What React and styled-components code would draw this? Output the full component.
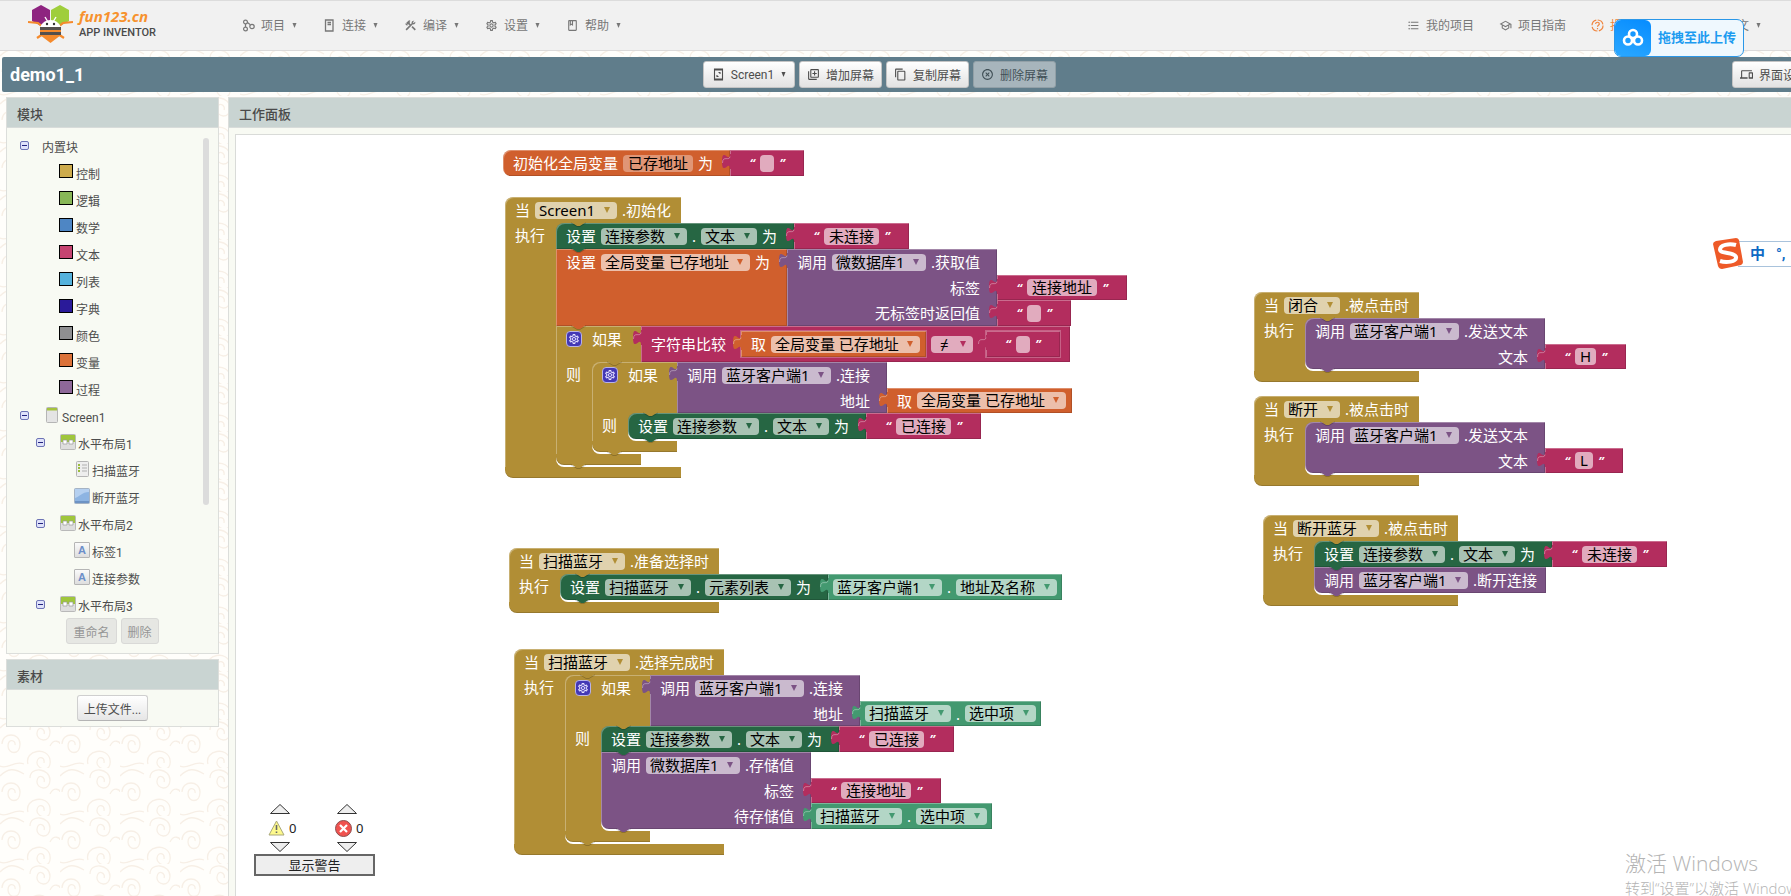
import React from 'react';
import styled, { createGlobalStyle, css } from 'styled-components';
import {
  MdOutlineSettings,
  MdConstruction,
  MdOutlineClass,
  MdOutlineSchool,
  MdFormatListBulleted,
  MdOutlineLibraryAdd,
  MdContentCopy,
  MdHighlightOff,
  MdDevices,
  MdLanguage,
} from 'react-icons/md';

const GOLD = '#b18e35';
const GREEN = '#266643';
const MINT = '#439970';
const ORANGE = '#d05f2d';
const PURPLE = '#7c5385';
const PINK = '#b32d5e';

const swirl = encodeURIComponent(
  `<svg xmlns="http://www.w3.org/2000/svg" width="60" height="48"><g fill="none" stroke="#f7efe6" stroke-width="1.3"><path d="M2 24c0-12 18-12 18 0s-12 10-12 2 8-6 7-1M30 10c0-12 20-10 20 2s-14 9-13 1 9-4 7 1M28 44c-4-14 20-18 22-4s-14 9-13 2 8-5 7 1M0 46c8 4 14-6 24-2M50 26c4-8 10-4 10-2M0 8c8-8 14-8 24-2"/></g></svg>`
);

const GlobalStyle = createGlobalStyle`
  body {
    margin: 0;
    overflow: hidden;
    font-family: Roboto, 'Noto Sans CJK SC', sans-serif;
    font-size: 12px;
    color: #4d4d4d;
    background: #fffefb url("data:image/svg+xml,${swirl}");
  }
  * {
    box-sizing: border-box;
  }
  button, input, select {
    font: inherit;
    color: inherit;
    margin: 0;
  }
  ul {
    list-style: none;
    margin: 0;
    padding: 0;
  }
`;

const Page = styled.div`
  display: flex;
  flex-direction: column;
  height: 100vh;
  overflow: hidden;
`;

/* ---------- top bar ---------- */

const TopBar = styled.header`
  display: flex;
  align-items: center;
  height: 51px;
  flex: none;
  padding: 0 30px 0 28px;
  background: #f1f1f1;
  border-top: 1px solid #dcdcdc;
  border-bottom: 1px solid #dcdada;
`;

const Brand = styled.a`
  display: flex;
  align-items: center;
  gap: 6px;
  width: 214px;
  margin-bottom: 3px;
  color: #4a4a4a;
  text-decoration: none;
`;

const BrandText = styled.span`
  display: flex;
  flex-direction: column;
  font-size: 11px;
  font-weight: 500;
  line-height: 16px;
`;

const BrandName = styled.strong`
  font-family: 'Open Sans', sans-serif;
  font-size: 15px;
  font-style: italic;
  line-height: 18px;
  color: #f7922d;
`;

const Nav = styled.nav`
  display: flex;
  align-items: center;
  gap: ${(p) => p.$gap}px;
  margin-left: ${(p) => (p.$end ? 'auto' : '0')};
`;

const NavButton = styled.button`
  display: flex;
  align-items: center;
  gap: 6px;
  padding: 0;
  border: 0;
  background: none;
  color: ${(p) => p.$color || '#777'};
  line-height: 18px;
  margin-right: ${(p) => (p.$apart ? '23px' : '0')};

  > svg:first-child {
    width: 13px;
    height: 13px;
    flex: none;
  }
`;

const CaretSvg = styled.svg`
  width: 5px;
  height: 5px;
  margin-left: 1px;
  fill: currentColor;
`;

const Caret = () => (
  <CaretSvg viewBox="0 0 5 5">
    <path d="M.5 0h4L2.500 5z" />
  </CaretSvg>
);

const Logo = () => (
  <svg width="45" height="38" viewBox="0 0 45 38">
    <path d="M13 0l9 5v11l-9 5-9-5V5z" fill="#8e2480" />
    <path d="M32 0l9 5v11l-9 5-9-5V5z" fill="#9fce3b" />
    <path
      d="M0 17l10 1 6 5M45 17l-10 1-6 5M9 33l6-4M36 33l-6-4"
      fill="none"
      stroke="#f58a2c"
      strokeWidth="2.200"
    />
    <path d="M17 12l3 5M28 12l-3 5" stroke="#fff" strokeWidth="1.400" />
    <path d="M12 24c0-5 5-9 10.500-9S33 19 33 24z" fill="#fff" />
    <circle cx="19" cy="19" r="1.200" fill="#333" />
    <circle cx="26" cy="19" r="1.200" fill="#333" />
    <path d="M12 22h21v8l-10.500 8L12 30z" fill="#f58a2c" />
    <path d="M12 22h21v3H12zM12 27h21v3H12z" fill="#54504e" />
  </svg>
);

const ProjectIcon = () => (
  <svg viewBox="0 0 13 13" fill="none" stroke="currentColor" strokeWidth="1.200">
    <circle cx="3.500" cy="3" r="1.900" />
    <circle cx="3.500" cy="10" r="1.900" />
    <circle cx="10" cy="7.500" r="2.200" />
    <path d="M3.500 5v3M5.500 3.500L8 5.500" />
  </svg>
);

const PhoneIcon = () => (
  <svg viewBox="0 0 13 13" fill="none" stroke="currentColor" strokeWidth="1.300">
    <path d="M2.500 1h7.500v11H2.500zM4.500 3.500h3.500M4.500 5.500h3.500" />
  </svg>
);

const ScreenIcon = () => (
  <svg viewBox="0 0 13 13" fill="none" stroke="currentColor" strokeWidth="1.100">
    <path d="M2.500 1h8v11h-8zM2.500 2h8M2.500 11h8M6.500 4.500h2M8 4.500v1.500M5 7v2M5 8.500h1.500" />
  </svg>
);

const DonateIcon = () => (
  <svg viewBox="0 0 13 13" fill="none" stroke="currentColor" strokeWidth="1.200">
    <circle cx="6.500" cy="6.500" r="5.500" strokeDasharray="7 1.500" />
    <path d="M4.700 5c0-2.400 3.600-2.300 3.600 0 0 1.300-1.800 1.300-1.800 2.700M6.500 9v1.200" />
  </svg>
);

/* ---------- project title bar ---------- */

const TitleBar = styled.div`
  display: flex;
  align-items: center;
  height: 35px;
  flex: none;
  margin: 6px 0 5px 2px;
  padding-left: 8px;
  background: #607d8b;
  border-radius: 2px 0 0 2px;
`;

const ProjectName = styled.h1`
  width: 693px;
  margin: 0;
  font-size: 18px;
  font-weight: 700;
  color: #fff;
`;

const ScreenTools = styled.div`
  display: flex;
  gap: 4px;
`;

const ToolButton = styled.button`
  display: flex;
  align-items: center;
  justify-content: center;
  gap: 6px;
  height: 27px;
  padding: 0 7px;
  border: 1px solid #c4c4c4;
  border-radius: 3px;
  background: linear-gradient(#fff, #e2e2e2);
  color: #4d4d4d;
  white-space: nowrap;

  > svg:first-child {
    width: 13px;
    height: 13px;
    flex: none;
  }

  &:disabled {
    opacity: 0.5;
    background: #eee;
    color: #222;
  }
`;

const ScreenButton = styled(ToolButton)`
  width: 92px;
`;

const ViewSwitch = styled.div`
  margin-left: auto;
  margin-right: -24px;
`;

/* ---------- side column ---------- */

const Columns = styled.main`
  display: flex;
  flex: 1;
  gap: 9px;
  min-height: 0;
  padding-left: 6px;
`;

const Side = styled.aside`
  display: flex;
  flex-direction: column;
  gap: 5px;
  width: 213px;
  flex: none;
`;

const Panel = styled.section`
  border: 1px solid #dcdedb;
  background: #f8faf3;
`;

const WorkPanel = styled(Panel)`
  display: flex;
  flex-direction: column;
  flex: 1;
  margin: 0 -8px -8px 0;
`;

const PanelTitle = styled.h2`
  height: 30px;
  flex: none;
  margin: 0;
  padding-left: 10px;
  border-bottom: 1px solid #d8dcda;
  background: #c9d4d2;
  font-size: 13px;
  font-weight: 500;
  line-height: 33px;
  color: #4a4a4a;
`;

const TreeArea = styled.div`
  display: flex;
  justify-content: space-between;
  height: 490px;
  padding: 7px 9px 0 13px;
  overflow: hidden;
`;

const ScrollThumb = styled.div`
  width: 6px;
  height: 367px;
  margin-top: 3px;
  border-radius: 3px;
  background: #dcdcdc;
`;

const TreeRow = styled.li`
  display: flex;
  height: 27px;
  line-height: 27px;
  padding-left: ${(p) => p.$depth * 16 + (p.$leaf ? 22 : 0)}px;
`;

const Fold = styled.button`
  width: 9px;
  height: 9px;
  margin: 6px ${(p) => (p.$plain ? 13 : 15)}px 0 0;
  padding: 0 1px;
  border: 1px solid #6d73b5;
  border-radius: 2px;
  background: linear-gradient(#23237f, #23237f) center / 5px 1px no-repeat, #dfe2fa;
`;

const NodeIcon = styled.svg`
  width: 16px;
  height: 16px;
  margin: 2px 2px 0 0;
`;

const Swatch = styled.span`
  width: 14px;
  height: 14px;
  margin: 2px 3px 0 1px;
  border: 1px solid #000;
  background: ${(p) => p.$color};
`;

const icons = {
  screen: (
    <NodeIcon viewBox="0 0 16 16">
      <rect x="2.500" y=".5" width="11" height="15" rx="1" fill="#e4e4e4" stroke="#b5b5b5" />
      <path d="M3 1h10v2.500H3z" fill="#a5c23e" />
    </NodeIcon>
  ),
  layout: (
    <NodeIcon viewBox="0 0 16 16">
      <rect x=".5" y=".5" width="15" height="15" rx="1" fill="#dedede" stroke="#b9b9b9" />
      <path d="M1 1h14v7H1z" fill="#9fc63b" />
      <path d="M3 6h4v4H3zM9 6h4v4H9z" fill="#fff" stroke="#999" strokeWidth=".7" />
    </NodeIcon>
  ),
  list: (
    <NodeIcon viewBox="0 0 16 16">
      <rect x="2.500" y=".5" width="12" height="15" rx="1" fill="#eee" stroke="#b5b5b5" />
      <path d="M4 4h2M4 7h2M4 10h2" stroke="#9bbd3c" strokeWidth="2" />
      <path d="M8 4h5M8 7h5M8 10h5" stroke="#b0b0b0" />
    </NodeIcon>
  ),
  button: (
    <NodeIcon viewBox="0 0 16 16">
      <rect x=".5" y=".5" width="15" height="15" rx="1" fill="#8db4e2" stroke="#a5b3c4" />
      <path d="M1 1h14v3C8 4 5 9 1 10z" fill="#b5d0f0" />
      <path d="M1 13h14v2H1z" fill="#6d93c4" />
    </NodeIcon>
  ),
};

const LabelIcon = styled.span`
  width: 16px;
  height: 16px;
  margin: 2px 2px 0 0;
  border: 1px solid #b5b5b5;
  border-radius: 1px;
  background: linear-gradient(#fafafa, #dedede);
  color: #6c8fc9;
  font: bold 11px/14px 'Liberation Sans', sans-serif;
  text-align: center;
`;

const ButtonRow = styled.div`
  display: flex;
  justify-content: center;
  gap: 4px;
  padding: ${(p) => (p.$tight ? '5px 0 5px' : '0 0 9px')};
`;

const SmallButton = styled.button`
  height: 26px;
  padding: 0 6px;
  border: 1px solid #cfcfcf;
  border-bottom-color: #b4b4b4;
  border-radius: 3px;
  background: linear-gradient(#fff, #e6e6e6);
  color: #4d4d4d;

  &:disabled {
    border-color: #d9d9d7;
    background: #e6e7e3;
    color: #959595;
  }
`;

/* ---------- workspace ---------- */

const Canvas = styled.div`
  position: relative;
  flex: 1;
  margin: 6px 0 0 6px;
  border: 1px solid #d9dbd8;
  background: #fff;
`;

const Placed = styled.div`
  position: absolute;
  left: ${(p) => p.$x}px;
  top: ${(p) => p.$y}px;
  font-family: 'Noto Sans', 'Noto Sans CJK SC', sans-serif;
  font-size: 15px;
  line-height: 24px;
  color: #fff;
  white-space: nowrap;
`;

const bevel = css`
  box-shadow: inset 1px 1px rgba(255, 255, 255, 0.3), inset -1px -1px rgba(0, 0, 0, 0.15);
`;

const Fields = styled.div`
  position: relative;
  display: flex;
  align-items: center;
  justify-content: ${(p) => (p.$right ? 'flex-end' : 'flex-start')};
  gap: 5px;
  height: ${(p) => p.$height || 26}px;
`;

const Body = styled.div`
  position: relative;
  background: ${(p) => p.$color};
  padding: 0 ${(p) => (p.$sockets ? 17 : 9)}px 0 10px;
  ${bevel}
`;

const Line = styled.div`
  position: relative;
  display: flex;
  width: max-content;

  &:first-child > ${Body} {
    border-top-left-radius: 8px;
  }
  &:last-child > ${Body} {
    border-bottom-left-radius: 8px;
  }
`;

const Slots = styled.div`
  display: flex;
  flex-direction: column;
  align-items: flex-start;
  padding-top: ${(p) => (p.$skip ? 26 : 0)}px;
`;

const ValueBody = styled.div`
  position: relative;
  display: flex;
  align-items: center;
  gap: 5px;
  height: ${(p) => p.$height || 26}px;
  padding: 0 ${(p) => p.$pad}px;
  background: ${(p) => p.$color};
  ${bevel}
`;

const OutTab = styled.svg`
  position: absolute;
  left: -8px;
  top: 3px;
  width: 9px;
  height: 20px;
  fill: ${(p) => p.$color};
`;

const NotchSvg = styled.svg`
  position: absolute;
  z-index: 1;
  left: ${(p) => p.$left}px;
  top: 100%;
  width: 17px;
  height: 5px;
  margin-top: -1px;
  fill: ${(p) => p.$color};
`;

const Chip = styled.span`
  position: relative;
  display: inline-flex;
  height: 17px;
  border-radius: 4px;
  background: rgba(255, 255, 255, 0.6);
  color: ${(p) => p.$color};

  > svg {
    position: absolute;
    right: 7px;
    top: 5px;
    width: 6px;
    height: 6px;
    fill: currentColor;
    pointer-events: none;
  }
`;

const Select = styled.select`
  appearance: none;
  height: 17px;
  padding: 0 ${(p) => (p.$short ? 24 : 21)}px 0 ${(p) => (p.$short ? 9 : 4)}px;
  border: 0;
  background: none;
  line-height: 17px;
  color: #000;
`;

const TextField = styled.input`
  field-sizing: content;
  min-width: 14px;
  height: 17px;
  padding: 0 5px;
  border: 0;
  border-radius: 4px;
  background: rgba(255, 255, 255, ${(p) => (p.$dim ? 0.35 : 0.6)});
  line-height: 17px;
  color: #000;
`;

const Quote = styled.span`
  width: 6px;
  font-size: 13px;
  font-style: italic;
  font-weight: 600;
  text-align: center;
`;

const CBlock = styled.div`
  position: relative;
  display: grid;
  grid-template-columns: max-content 1fr;
  width: max-content;
`;

const Head = styled.div`
  position: relative;
  padding: 0 ${(p) => (p.$sockets ? 19 : 10)}px 0 10px;
  background: ${(p) => p.$color};
  box-shadow: inset 1px 1px rgba(255, 255, 255, 0.3);

  ${CBlock}:first-child > & {
    border-top-left-radius: 8px;
  }
`;

const Arm = styled.div`
  grid-column: 1 / -1;
  display: flex;
  background: linear-gradient(${GOLD}, ${GOLD}) 0 0 / ${(p) => p.$indent + 8}px 100% no-repeat;
`;

const ArmLabel = styled.div`
  width: ${(p) => p.$indent}px;
  flex: none;
  padding-left: 10px;
  box-shadow: inset 1px 0 rgba(255, 255, 255, 0.3);
`;

const Mouth = styled.div`
  padding-bottom: 2px;
  border-bottom-left-radius: 8px;
  background: linear-gradient(transparent 12px, #fff 12px);
`;

const Foot = styled.div`
  position: relative;
  grid-column: 1;
  height: 11px;
  border-bottom-left-radius: 8px;
  background: ${GOLD};
  box-shadow: inset 0 -1px rgba(0, 0, 0, 0.15);
`;

const Mutator = styled.button`
  display: flex;
  width: 16px;
  height: 16px;
  margin-right: 5px;
  padding: 1px;
  border: 1px solid #b9b3e6;
  border-radius: 4px;
  background: #4338b5;
  color: #e4e1ff;
`;

const Plug = ({ color }) => (
  <OutTab viewBox="0 0 9 20" $color={color}>
    <path d="M9 1H8c0 10-8-8-8 7.500s8-2.500 8 7.500h1z" />
    <path
      d="M8 3.500C7.500 8.500 .5 2 .5 10"
      fill="none"
      stroke="#fff"
      strokeOpacity=".35"
    />
  </OutTab>
);

const Notch = ({ color, left = 14 }) => (
  <NotchSvg viewBox="0 0 17 5" $color={color} $left={left}>
    <path d="M1 0l6 4h3l6-4z" />
    <path d="M1 .8l6 3.700h3l6-3.700" fill="none" stroke="#000" strokeOpacity=".2" />
  </NotchSvg>
);

const Pick = ({ color, children, short }) => (
  <Chip $color={color}>
    <Select aria-label={children} $short={short}>
      <option>{children}</option>
    </Select>
    <svg viewBox="0 0 6 6">
      <path d="M0 0h6L3 6z" />
    </svg>
  </Chip>
);

const Value = ({ color, pad = 6, height, children }) => (
  <ValueBody $color={color} $pad={pad} $height={height}>
    <Plug color={color} />
    {children}
  </ValueBody>
);

const TextValue = ({ text = '', height }) => (
  <Value color={PINK} pad={19} height={height}>
    <Quote>“</Quote>
    <TextField aria-label="文本" defaultValue={text} />
    <Quote>”</Quote>
  </Value>
);

const PropertyValue = ({ component, property, height }) => (
  <Value color={MINT} pad={5} height={height}>
    <Pick color={MINT}>{component}</Pick>
    <span>.</span>
    <Pick color={MINT}>{property}</Pick>
  </Value>
);

const GlobalValue = ({ height }) => (
  <Value color={ORANGE} height={height}>
    <span>&nbsp;取</span>
    <Pick color={ORANGE}>全局变量 已存地址</Pick>
  </Value>
);

const SetProperty = ({ component, property, children }) => (
  <Line>
    <Body $color={GREEN} $sockets>
      <Fields>
        <span>设置</span>
        <Pick color={GREEN}>{component}</Pick>
        <span>.</span>
        <Pick color={GREEN}>{property}</Pick>
        <span>为</span>
      </Fields>
      <Notch color={GREEN} />
    </Body>
    <Slots>{children}</Slots>
  </Line>
);

// the second row of a call is a pixel shorter than the others
const rowHeight = (index) => (index === 0 ? 25 : 26);

const CallBody = ({ component, method, args, notch }) => (
  <Body $color={PURPLE} $sockets={args.length > 0}>
    <Fields>
      <span>调用</span>
      <Pick color={PURPLE}>{component}</Pick>
      <span>.{method}</span>
    </Fields>
    {args.map((arg, index) => (
      <Fields key={arg} $right $height={rowHeight(index)}>
        <span>{arg}</span>
      </Fields>
    ))}
    {notch && <Notch color={PURPLE} />}
  </Body>
);

const Call = ({ component, method, args = [], children }) => (
  <Line>
    <CallBody component={component} method={method} args={args} notch />
    <Slots $skip>{children}</Slots>
  </Line>
);

const ValueLine = styled.div`
  position: relative;
  display: flex;
`;

const CallValue = ({ component, method, args, children }) => (
  <ValueLine>
    <CallBody component={component} method={method} args={args} />
    <Plug color={PURPLE} />
    <Slots $skip>{children}</Slots>
  </ValueLine>
);

const When = ({ x, y, component, event, children }) => (
  <Placed $x={x} $y={y}>
    <CBlock>
      <Head $color={GOLD}>
        <Fields>
          <span>当</span>
          <Pick color={GOLD}>{component}</Pick>
          <span>.{event}</span>
        </Fields>
        <Notch color={GOLD} left={65} />
      </Head>
      <Arm $indent={51}>
        <ArmLabel $indent={51}>执行</ArmLabel>
        <Mouth>{children}</Mouth>
      </Arm>
      <Foot />
    </CBlock>
  </Placed>
);

const If = ({ test, children }) => (
  <CBlock>
    <Head $color={GOLD} $sockets>
      <Fields>
        <Mutator aria-label="如果">
          <MdOutlineSettings size={12} />
        </Mutator>
        <span>如果</span>
      </Fields>
      <Notch color={GOLD} left={50} />
    </Head>
    <Slots>{test}</Slots>
    <Arm $indent={36}>
      <ArmLabel $indent={36}>则</ArmLabel>
      <Mouth>{children}</Mouth>
    </Arm>
    <Foot>
      <Notch color={GOLD} />
    </Foot>
  </CBlock>
);

const InitBody = styled(Body)`
  border-radius: 8px 0 0 8px;
`;

const Inset = styled.div`
  margin-left: ${(p) => p.$left}px;
  outline: 1px solid rgba(255, 255, 255, 0.25);
`;

/* ---------- warnings ---------- */

const Warnings = styled.div`
  position: absolute;
  left: 18px;
  bottom: 26px;
  width: 121px;
  color: #222;
  font-family: 'Noto Sans', 'Noto Sans CJK SC', sans-serif;
  font-size: 13px;
`;

const Counters = styled.div`
  display: flex;
  gap: 39px;
  padding: 0 0 2px 14px;
`;

const Counter = styled.div`
  display: flex;
  flex-direction: column;
  align-items: flex-start;
  width: 28px;
`;

const Count = styled.div`
  display: flex;
  align-items: center;
  gap: 4px;
  height: 28px;
`;

const StepButton = styled.button`
  display: flex;
  margin-left: 2px;
  padding: 0;
  border: 0;
  background: none;
`;

const ShowButton = styled.button`
  width: 100%;
  height: 22px;
  padding: 0;
  border: 2px solid #666;
  background: #eee;
  line-height: 18px;
`;

const Step = ({ down, label }) => (
  <StepButton aria-label={label}>
    <svg width="20" height="10" viewBox="0 0 20 10">
      <path d={down ? 'M.5.5h19L10 9.500z' : 'M.5 9.500h19L10 .5z'} fill="#eee" stroke="#333" />
    </svg>
  </StepButton>
);

const WarnIcon = () => (
  <svg width="17" height="16" viewBox="0 0 17 16">
    <path d="M8.500 1L16 15H1z" fill="#fdf98c" stroke="#a9a77a" strokeLinejoin="round" />
    <path d="M8.500 5v5M8.500 11.500v1.500" stroke="#666" strokeWidth="1.600" />
  </svg>
);

const ErrorIcon = () => (
  <svg width="17" height="17" viewBox="0 0 17 17">
    <circle cx="8.500" cy="8.500" r="8" fill="#f0524f" stroke="#8c5050" />
    <path d="M5 5l7 7M12 5l-7 7" stroke="#fff" strokeWidth="2.200" />
  </svg>
);

/* ---------- floating things ---------- */

const DropTarget = styled.button`
  position: absolute;
  right: 47px;
  top: 19px;
  display: flex;
  width: 130px;
  height: 38px;
  padding: 0;
  border: 1px solid #2a97e8;
  border-radius: 7px;
  background: #eff8fe;
  overflow: hidden;
  color: #1c9bf0;
  font-size: 13px;
  font-weight: 700;
  line-height: 36px;
  white-space: nowrap;

  > span {
    flex: 1;
    text-align: center;
  }
`;

const DropIcon = styled.svg`
  width: 36px;
  height: 36px;
  flex: none;
  border-radius: 0 6px 6px 0;
  background: linear-gradient(20deg, #2ba8ff, #068cff);
`;

const ImeBar = styled.div`
  position: absolute;
  right: 0;
  top: 238px;
  display: flex;
  align-items: center;
  height: 31px;
  color: #0f6ac4;
  font-size: 15px;
  font-weight: 700;
`;

const ImeText = styled.div`
  display: flex;
  align-items: center;
  gap: 11px;
  height: 26px;
  margin-left: -6px;
  padding-left: 12px;
  border: solid #a9c3dc;
  border-width: 1px 0;
  background: #fff;
  line-height: 24px;

  > span:last-child {
    width: 15px;
  }
`;

const ImeLogo = styled.svg`
  position: relative;
  width: 32px;
  height: 31px;
`;

const Watermark = styled.div`
  position: absolute;
  right: 0;
  bottom: -3px;
  width: 166px;
  overflow: hidden;
  color: #b4b4b4;
  font-family: 'Open Sans', 'Noto Sans CJK SC', sans-serif;
  font-weight: 300;
  font-size: 15px;
  line-height: 22px;
  white-space: nowrap;

  > strong {
    display: block;
    font-size: 21px;
    font-weight: 300;
    line-height: 28px;
  }
`;

const drawers = [
  ['控制', '#cdab4c'],
  ['逻辑', '#88b757'],
  ['数学', '#4e86c4'],
  ['文本', '#c54370'],
  ['列表', '#55b2dc'],
  ['字典', '#2a1a99'],
  ['颜色', '#8f8f91'],
  ['变量', '#dc7239'],
  ['过程', '#8e6899'],
];

const components = [
  { name: 'Screen1', depth: 0, icon: 'screen' },
  { name: '水平布局1', depth: 1, icon: 'layout' },
  { name: '扫描蓝牙', depth: 2, icon: 'list', leaf: true },
  { name: '断开蓝牙', depth: 2, icon: 'button', leaf: true },
  { name: '水平布局2', depth: 1, icon: 'layout' },
  { name: '标签1', depth: 2, icon: 'label', leaf: true },
  { name: '连接参数', depth: 2, icon: 'label', leaf: true },
  { name: '水平布局3', depth: 1, icon: 'layout' },
];

const menus = [
  ['项目', ProjectIcon],
  ['连接', PhoneIcon],
  ['编译', MdConstruction],
  ['设置', MdOutlineSettings],
  ['帮助', MdOutlineClass],
];

const BlockTree = () => (
  <TreeArea>
    <ul>
      <TreeRow $depth={0}>
        <Fold aria-label="内置块" $plain />
        内置块
      </TreeRow>
      {drawers.map(([name, color]) => (
        <TreeRow key={name} $depth={1} $leaf>
          <Swatch $color={color} />
          {name}
        </TreeRow>
      ))}
      {components.map(({ name, depth, icon, leaf }) => (
        <TreeRow key={name} $depth={depth} $leaf={leaf}>
          {!leaf && <Fold aria-label={name} />}
          {icon === 'label' ? <LabelIcon>A</LabelIcon> : icons[icon]}
          {name}
        </TreeRow>
      ))}
    </ul>
    <ScrollThumb />
  </TreeArea>
);

const Workspace = () => (
  <Canvas>
    <Placed $x={267} $y={15}>
      <Line>
        <InitBody $color={ORANGE} $sockets>
          <Fields>
            <span>初始化全局变量</span>
            <TextField aria-label="变量名" defaultValue="已存地址" $dim />
            <span>为</span>
          </Fields>
        </InitBody>
        <Slots>
          <TextValue />
        </Slots>
      </Line>
    </Placed>

    <When x={269} y={62} component="Screen1" event="初始化">
      <SetProperty component="连接参数" property="文本">
        <TextValue text="未连接" />
      </SetProperty>
      <Line>
        <Body $color={ORANGE} $sockets>
          <Fields>
            <span>设置</span>
            <Pick color={ORANGE}>全局变量 已存地址</Pick>
            <span>为</span>
          </Fields>
          <Notch color={ORANGE} />
        </Body>
        <CallValue component="微数据库1" method="获取值" args={['标签', '无标签时返回值']}>
          <TextValue text="连接地址" height={25} />
          <TextValue />
        </CallValue>
      </Line>
      <If
        test={
          <Value color={PINK} pad={10} height={36}>
            <span>字符串比较</span>
            <Inset $left={10}>
              <GlobalValue />
            </Inset>
            <Pick color={PINK} short>
              ≠
            </Pick>
            <Inset $left={8}>
              <TextValue />
            </Inset>
          </Value>
        }
      >
        <If
          test={
            <CallValue component="蓝牙客户端1" method="连接" args={['地址']}>
              <GlobalValue height={25} />
            </CallValue>
          }
        >
          <SetProperty component="连接参数" property="文本">
            <TextValue text="已连接" />
          </SetProperty>
        </If>
      </If>
    </When>

    <When x={273} y={413} component="扫描蓝牙" event="准备选择时">
      <SetProperty component="扫描蓝牙" property="元素列表">
        <PropertyValue component="蓝牙客户端1" property="地址及名称" />
      </SetProperty>
    </When>

    <When x={278} y={514} component="扫描蓝牙" event="选择完成时">
      <If
        test={
          <CallValue component="蓝牙客户端1" method="连接" args={['地址']}>
            <PropertyValue component="扫描蓝牙" property="选中项" height={25} />
          </CallValue>
        }
      >
        <SetProperty component="连接参数" property="文本">
          <TextValue text="已连接" />
        </SetProperty>
        <Call component="微数据库1" method="存储值" args={['标签', '待存储值']}>
          <TextValue text="连接地址" height={25} />
          <PropertyValue component="扫描蓝牙" property="选中项" />
        </Call>
      </If>
    </When>

    <When x={1018} y={157} component="闭合" event="被点击时">
      <Call component="蓝牙客户端1" method="发送文本" args={['文本']}>
        <TextValue text="H" height={25} />
      </Call>
    </When>

    <When x={1018} y={261} component="断开" event="被点击时">
      <Call component="蓝牙客户端1" method="发送文本" args={['文本']}>
        <TextValue text="L" height={25} />
      </Call>
    </When>

    <When x={1027} y={380} component="断开蓝牙" event="被点击时">
      <SetProperty component="连接参数" property="文本">
        <TextValue text="未连接" />
      </SetProperty>
      <Call component="蓝牙客户端1" method="断开连接" />
    </When>

    <Warnings>
      <Counters>
        <Counter>
          <Step label="上一个警告" />
          <Count>
            <WarnIcon />0
          </Count>
          <Step down label="下一个警告" />
        </Counter>
        <Counter>
          <Step label="上一个错误" />
          <Count>
            <ErrorIcon />0
          </Count>
          <Step down label="下一个错误" />
        </Counter>
      </Counters>
      <ShowButton>显示警告</ShowButton>
    </Warnings>
  </Canvas>
);

const App = () => {
  return (
    <Page>
      <GlobalStyle />
      <TopBar>
        <Brand href="#">
          <Logo />
          <BrandText>
            <BrandName>fun123.cn</BrandName>
            APP INVENTOR
          </BrandText>
        </Brand>
        <Nav $gap={26}>
          {menus.map(([name, Icon]) => (
            <NavButton key={name}>
              <Icon />
              {name}
              <Caret />
            </NavButton>
          ))}
        </Nav>
        <Nav $end $gap={25}>
          <NavButton>
            <MdFormatListBulleted />
            我的项目
          </NavButton>
          <NavButton>
            <MdOutlineSchool />
            项目指南
          </NavButton>
          <NavButton $color="#f0843c" $apart>
            <DonateIcon />
            捐赠支持
          </NavButton>
          <NavButton>
            <MdLanguage />
            中文
            <Caret />
          </NavButton>
        </Nav>
      </TopBar>

      <TitleBar>
        <ProjectName>demo1_1</ProjectName>
        <ScreenTools>
          <ScreenButton>
            <ScreenIcon />
            Screen1
            <Caret />
          </ScreenButton>
          <ToolButton>
            <MdOutlineLibraryAdd />
            增加屏幕
          </ToolButton>
          <ToolButton>
            <MdContentCopy />
            复制屏幕
          </ToolButton>
          <ToolButton disabled>
            <MdHighlightOff />
            删除屏幕
          </ToolButton>
        </ScreenTools>
        <ViewSwitch>
          <ToolButton>
            <MdDevices />
            界面设计
          </ToolButton>
        </ViewSwitch>
      </TitleBar>

      <Columns>
        <Side>
          <Panel>
            <PanelTitle>模块</PanelTitle>
            <BlockTree />
            <ButtonRow>
              <SmallButton disabled>重命名</SmallButton>
              <SmallButton disabled>删除</SmallButton>
            </ButtonRow>
          </Panel>
          <Panel>
            <PanelTitle>素材</PanelTitle>
            <ButtonRow $tight>
              <SmallButton>上传文件...</SmallButton>
            </ButtonRow>
          </Panel>
        </Side>
        <WorkPanel>
          <PanelTitle>工作面板</PanelTitle>
          <Workspace />
        </WorkPanel>
      </Columns>

      <DropTarget>
        <DropIcon viewBox="0 0 36 36" fill="none" stroke="#fff" strokeWidth="2.600">
          <circle cx="18" cy="14" r="4" />
          <circle cx="13" cy="20.500" r="4" />
          <circle cx="23" cy="20.500" r="4" />
        </DropIcon>
        <span>拖拽至此上传</span>
      </DropTarget>
      <ImeBar>
        <ImeLogo viewBox="0 0 32 31">
          <path d="M4 3L24 0q2 0 3 2l4 22q0 2-2 3L10 31q-3 0-4-3L1 6q0-2 3-3z" fill="#ee5a28" />
          <path
            d="M24 7C17 5 8 7 8 11.500S23 14 24 19 14 25 8 23"
            fill="none"
            stroke="#fff"
            strokeWidth="4"
          />
        </ImeLogo>
        <ImeText>
          <span>中</span>
          <span>°,</span>
        </ImeText>
      </ImeBar>
      <Watermark>
        <strong>激活 Windows</strong>
        转到“设置”以激活 Windows。
      </Watermark>
    </Page>
  );
};

export default App;
